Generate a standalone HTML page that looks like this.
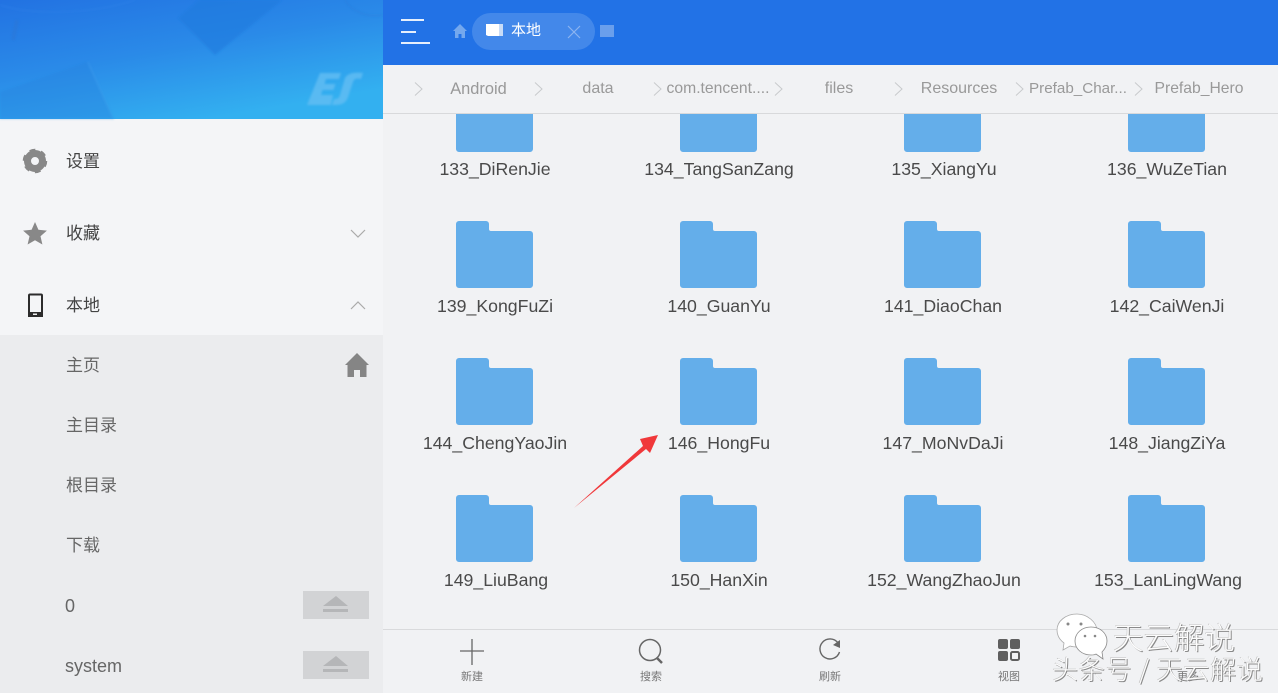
<!DOCTYPE html>
<html lang="zh"><head><meta charset="utf-8"><title>ES</title>
<style>
html,body{margin:0;padding:0;width:1278px;height:693px;overflow:hidden;background:#f1f2f4}
body{position:relative;font-family:"Liberation Sans","Noto Sans CJK SC",sans-serif}
svg{position:absolute;left:0;top:0;overflow:visible}
.t{position:absolute;white-space:nowrap;line-height:20px;height:20px}
.l{font-size:17.7px;color:#4a4a4a;width:220px;text-align:center;margin-top:0}
.m{font-size:17px;color:#444;left:66px}
.s{font-size:17px;color:#666;left:66px}
.e{font-size:18px;color:#666;left:65px}
.c{font-size:16px;color:#999;transform:translateX(-50%)}
.b{position:absolute;font-size:11px;color:#777;width:80px;text-align:center;line-height:14px;height:14px;white-space:nowrap}
.w{font-family:"Noto Sans CJK SC",sans-serif;color:#fdfdfd;text-shadow:1px 1px 0 #8a8a8a,-.5px -.5px 0 #bbb;font-weight:300}
</style></head><body>
<svg width="1278" height="693" viewBox="0 0 1278 693">
<defs>
<linearGradient id="g" x1="0" y1="0" x2=".55" y2="1"><stop offset="0" stop-color="#2272e2"/><stop offset=".5" stop-color="#2a8ae8"/><stop offset="1" stop-color="#33b0f0"/></linearGradient>
<filter id="bl" x="-10%" y="-10%" width="120%" height="120%"><feGaussianBlur stdDeviation="1"/></filter>
<path id="f" d="M0 3a3 3 0 0 1 3-3H30a3 3 0 0 1 3 3v5a2 2 0 0 0 2 2H74a3 3 0 0 1 3 3V64a3 3 0 0 1-3 3H3a3 3 0 0 1-3-3Z" fill="#64aeea"/>
</defs>
<rect x="0" y="119" width="383" height="216" fill="#f4f5f7"/>
<rect x="0" y="335" width="383" height="358" fill="#ebecee"/>
<rect x="0" y="0" width="383" height="119" fill="url(#g)"/>
<g filter="url(#bl)">
<path d="M178 18 215 55 282 0H199Z" fill="#217ade" opacity=".6"/>
<path d="M0 92 87 62 114 119H0Z" fill="#2481de" opacity=".4"/>
<path d="M88 62 113 119" stroke="#4aa3ee" stroke-width="1" opacity=".4"/>
<path d="M0 5C30 15 90 15 135 0" stroke="#3a88ea" fill="none" opacity=".4"/>
<path d="M345 0C352 12 368 18 383 15" stroke="#2a78d8" fill="none" opacity=".5"/>
<path d="M17 20 13 40" stroke="#2a76d6" stroke-width="4" opacity=".5"/>
<path d="M320 73h21l-2 6h-13l-1.500 5h11l-2 6h-11l-1.500 5h12l-2 10h-24Z" fill="#63bdf3" opacity=".8"/>
<path d="M345 78c3-5 10-6 18-5l-2 6c-5-1-7 0-8 3l-5 15c-2 6-6 8-13 8h-3l2-6c4 0 5-1 6-4Z" fill="#63bdf3" opacity=".8"/>
</g>

<rect x="383" y="0" width="895" height="65" fill="#2272e6"/>
<rect x="401" y="19" width="23" height="2" fill="#e6effc"/><rect x="401" y="31" width="15" height="2" fill="#e6effc"/><rect x="401" y="42" width="29" height="2" fill="#e6effc"/>
<path d="M460 24 453 31h2v7h3.500v-4h3v4H465v-7h2Z" fill="#74a8ee"/>
<rect x="472" y="13" width="123" height="37" rx="18.500" fill="#4388ea"/>
<path d="M486 24h17v12h-15l-2-1Z" fill="#fff"/><path d="M499 24h4v12h-4Z" fill="#c9dcf7"/>
<path d="M568 26 580 38M580 26 568 38" stroke="#8cb4f0" stroke-width="1.200"/>
<rect x="600" y="25" width="14" height="12" fill="#6a9fec"/>

<use href="#f" x="456" y="85"/><use href="#f" x="680" y="85"/><use href="#f" x="904" y="85"/><use href="#f" x="1128" y="85"/>
<rect x="383" y="65" width="895" height="48" fill="#f1f2f4"/>
<rect x="383" y="113" width="895" height="1" fill="#d8d9db"/>
<path d="M415 82.500l7 6.500-7 6.500M535 82.500l7 6.500-7 6.500M654 82.500l7 6.500-7 6.500M775 82.500l7 6.500-7 6.500M895 82.500l7 6.500-7 6.500M1016 82.500l7 6.500-7 6.500M1135 82.500l7 6.500-7 6.500" fill="none" stroke="#c8cacc" stroke-width="1"/>

<use href="#f" x="456" y="221"/><use href="#f" x="680" y="221"/><use href="#f" x="904" y="221"/><use href="#f" x="1128" y="221"/>
<use href="#f" x="456" y="358"/><use href="#f" x="680" y="358"/><use href="#f" x="904" y="358"/><use href="#f" x="1128" y="358"/>
<use href="#f" x="456" y="495"/><use href="#f" x="680" y="495"/><use href="#f" x="904" y="495"/><use href="#f" x="1128" y="495"/>

<path d="M574 508 643 446 640 439 658 435 650 453 646 449Z" fill="#f0383a"/>

<rect x="383" y="629" width="895" height="1" fill="#d9dadc"/>
<path d="M472 639v26M460 651h24" stroke="#666" stroke-width="1.300"/>
<circle cx="650" cy="650" r="10.500" fill="none" stroke="#666" stroke-width="1.500"/><path d="M657 658 662 663" stroke="#666" stroke-width="2.500"/>
<path d="M838 643A10 10 0 1 0 839.500 652" fill="none" stroke="#666" stroke-width="1.400"/><path d="M833 645 840 648 840 640Z" fill="#666"/>
<rect x="998" y="639" width="10" height="10" rx="2" fill="#5f5f5f"/><rect x="1010" y="639" width="10" height="10" rx="2" fill="#5f5f5f"/><rect x="998" y="651" width="10" height="10" rx="2" fill="#5f5f5f"/><rect x="1011" y="652" width="8" height="8" rx="1.500" fill="none" stroke="#5f5f5f" stroke-width="2"/>

<circle cx="35" cy="161" r="7.500" fill="none" stroke="#888" stroke-width="7"/>
<circle cx="35" cy="161" r="11" fill="none" stroke="#888" stroke-width="2.500" stroke-dasharray="5.760 5.760"/>
<path d="M35 222l3.400 7.800 8.500.8-6.400 5.600 1.900 8.300L35 240.200l-7.400 4.300 1.900-8.300-6.400-5.600 8.500-.8Z" fill="#888"/>
<path d="M351 230l7 7 7-7" fill="none" stroke="#aaa" stroke-width="1.200"/>
<rect x="29" y="294.500" width="13" height="21" rx="1" fill="none" stroke="#2c2c2c" stroke-width="2"/><rect x="28" y="312" width="15" height="5" fill="#2c2c2c"/><rect x="33" y="313.500" width="4" height="1.500" fill="#eee"/>
<path d="M351 309l7-7 7 7" fill="none" stroke="#aaa" stroke-width="1.200"/>
<path d="M357 353 345 365h2.500v12h6.500v-7h6v7h6.500v-12H369Z" fill="#858585"/>
<rect x="303" y="591" width="66" height="28" fill="#d2d3d5"/><path d="M336 596 348 606H323Z" fill="#b5b6b8"/><rect x="323" y="609" width="25" height="3" fill="#b5b6b8"/>
<rect x="303" y="651" width="66" height="28" fill="#d2d3d5"/><path d="M336 656 348 666H323Z" fill="#b5b6b8"/><rect x="323" y="669" width="25" height="3" fill="#b5b6b8"/>
</svg>

<div class="t" style="left:511px;top:21px;font-size:15px;color:#fff">本地</div>
<div class="t c" style="left:478.500px;top:79px;font-size:16.400px">Android</div>
<div class="t c" style="left:598px;top:79px">data</div>
<div class="t c" style="left:718px;top:79px;font-size:15.700px">com.tencent....</div>
<div class="t c" style="left:839px;top:79px">files</div>
<div class="t c" style="left:959px;top:79px">Resources</div>
<div class="t c" style="left:1078px;top:79px;font-size:15.200px">Prefab_Char...</div>
<div class="t c" style="left:1199px;top:79px;font-size:15.700px">Prefab_Hero</div>

<div class="t l" style="left:385px;top:159px">133_DiRenJie</div>
<div class="t l" style="left:609px;top:159px">134_TangSanZang</div>
<div class="t l" style="left:834px;top:159px">135_XiangYu</div>
<div class="t l" style="left:1057px;top:159px">136_WuZeTian</div>
<div class="t l" style="left:385px;top:296px">139_KongFuZi</div>
<div class="t l" style="left:609px;top:296px">140_GuanYu</div>
<div class="t l" style="left:833px;top:296px">141_DiaoChan</div>
<div class="t l" style="left:1057px;top:296px">142_CaiWenJi</div>
<div class="t l" style="left:385px;top:433px">144_ChengYaoJin</div>
<div class="t l" style="left:609px;top:433px">146_HongFu</div>
<div class="t l" style="left:833px;top:433px">147_MoNvDaJi</div>
<div class="t l" style="left:1057px;top:433px">148_JiangZiYa</div>
<div class="t l" style="left:386px;top:570px">149_LiuBang</div>
<div class="t l" style="left:609px;top:570px">150_HanXin</div>
<div class="t l" style="left:834px;top:570px">152_WangZhaoJun</div>
<div class="t l" style="left:1058px;top:570px">153_LanLingWang</div>

<div class="t m" style="top:152px">设置</div>
<div class="t m" style="top:224px">收藏</div>
<div class="t m" style="top:296px">本地</div>
<div class="t s" style="top:356px">主页</div>
<div class="t s" style="top:416px">主目录</div>
<div class="t s" style="top:476px">根目录</div>
<div class="t s" style="top:536px">下载</div>
<div class="t e" style="top:596px">0</div>
<div class="t e" style="top:656px">system</div>

<div class="b" style="left:432px;top:670px">新建</div>
<div class="b" style="left:611px;top:670px">搜索</div>
<div class="b" style="left:790px;top:670px">刷新</div>
<div class="b" style="left:969px;top:670px">视图</div>
<div class="b" style="left:1148px;top:670px">更多</div>

<svg width="1278" height="693" viewBox="0 0 1278 693" style="pointer-events:none">
<path d="M1077 614c-11 0-20 7-20 16 0 6 3 10 7 13l-1 7 7-4c3 1 5 1 8 1 10 0 19-7 19-16 0-9-10-17-20-17Z" fill="#fff" stroke="#aaa" stroke-width=".8"/>
<path d="M1091 627c-9 0-16 6-16 14s7 14 16 14c2 0 4 0 5-1l7 5-1-7c3-3 5-7 5-11 0-8-7-14-16-14Z" fill="#fff" stroke="#888" stroke-width=".8"/>
<circle cx="1068" cy="624" r="1.500" fill="#888"/><circle cx="1081" cy="624" r="1.500" fill="#888"/><circle cx="1085" cy="636" r="1.300" fill="#888"/><circle cx="1095" cy="636" r="1.300" fill="#888"/>
</svg>
<div class="t w" style="left:1113px;top:621px;font-size:30.500px;line-height:30px;height:30px">天云解说</div>
<div class="t w" style="left:1052px;top:654px;font-size:26px;line-height:30px;height:30px;letter-spacing:.8px">头条号 / 天云解说</div>
</body></html>
